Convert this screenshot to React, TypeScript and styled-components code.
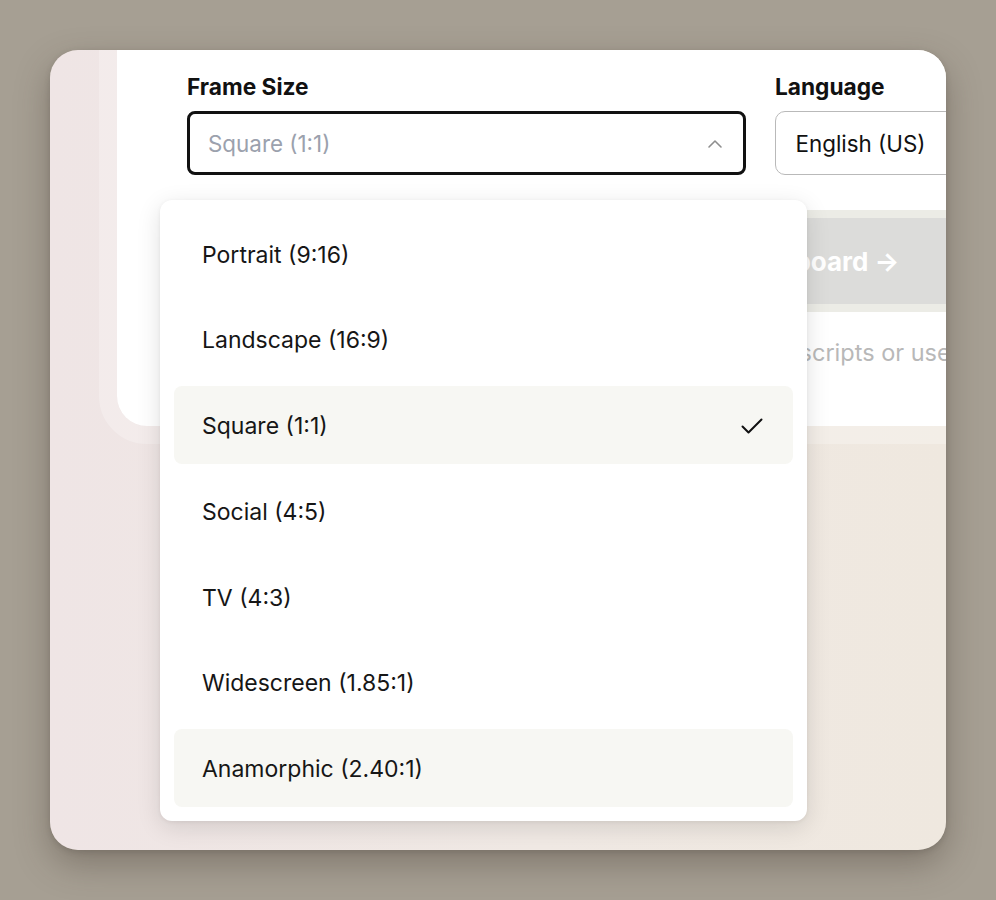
import React from 'react';
import styled, { createGlobalStyle } from 'styled-components';

const GlobalStyle = createGlobalStyle`
  html, body {
    margin: 0;
    padding: 0;
    background: #a69f93;
    font-family: Inter, 'Noto Sans', sans-serif;
    -webkit-font-smoothing: antialiased;
  }
  * { box-sizing: border-box; }
`;

const Stage = styled.div`
  width: 996px;
  height: 900px;
  padding: 50px;
`;

const Window = styled.div`
  position: relative;
  width: 896px;
  height: 800px;
  border-radius: 28px;
  overflow: hidden;
  background: linear-gradient(90deg, #efe5e5 0%, #f0e9e4 55%, #efe8df 100%);
  box-shadow: 0 14px 34px rgba(60, 50, 40, 0.35), 0 2px 6px rgba(0, 0, 0, 0.12);
  padding-left: 49px;
`;

const Halo = styled.div`
  width: 1400px;
  margin-top: -78px;
  border: 18px solid rgba(255, 255, 255, 0.25);
  border-radius: 48px;
`;

const Card = styled.div`
  background: #ffffff;
  border-radius: 30px;
  padding: 83px 0 59px 70px;
`;

const FormRow = styled.div`
  display: flex;
  gap: 29px;
`;

const Field = styled.div<{ $width: number }>`
  display: flex;
  flex-direction: column;
  gap: 10px;
  width: ${p => p.$width}px;
`;

const Label = styled.div`
  font-size: 22.7px;
  line-height: 28px;
  font-weight: 700;
  color: #111111;
`;

const SelectBox = styled.div<{ $focused?: boolean }>`
  display: flex;
  align-items: center;
  justify-content: space-between;
  height: 64px;
  padding: 1px 18px 0 ${p => (p.$focused ? 18 : 19.5)}px;
  border: ${p => (p.$focused ? '3px solid #111111' : '1.5px solid #b9b9b9')};
  border-radius: ${p => (p.$focused ? 8 : 10)}px;
  background: #ffffff;
  font-size: 22.4px;
  color: ${p => (p.$focused ? '#9ba1ad' : '#111111')};
`;

const ButtonFrame = styled.div`
  margin-top: 35px;
  width: 1128px;
  border-top: 8px solid #ecece6;
  border-bottom: 8px solid #ecece6;
  background: #dcdcda;
  height: 102px;
  display: flex;
  align-items: center;
  justify-content: center;
  font-size: 26px;
  font-weight: 700;
  color: #ffffff;
`;

const Helper = styled.div`
  margin-top: 27px;
  padding-left: 488px;
  font-size: 23.5px;
  line-height: 28px;
  color: #b8b8b8;
  white-space: nowrap;
`;

const Menu = styled.div`
  position: absolute;
  left: 110px;
  top: 150px;
  width: 647px;
  padding: 14px;
  background: #ffffff;
  border-radius: 12px;
  box-shadow: 0 6px 24px rgba(0, 0, 0, 0.12), 0 1px 4px rgba(0, 0, 0, 0.06);
  display: flex;
  flex-direction: column;
  gap: 7.8px;
`;

const Option = styled.div<{ $highlighted?: boolean }>`
  height: 78px;
  display: flex;
  align-items: center;
  justify-content: space-between;
  padding: 3px 28px 0 28px;
  border-radius: 8px;
  background: ${p => (p.$highlighted ? '#f7f7f3' : 'transparent')};
  font-size: 23px;
  color: #161616;
`;

const ChevronUp = () => (
  <svg width="20" height="20" viewBox="0 0 20 20" fill="none">
    <path d="M4 13l6-6 6 6" stroke="#8e8e8e" strokeWidth="1.6" strokeLinecap="round" strokeLinejoin="round" />
  </svg>
);

const Check = () => (
  <svg width="26" height="26" viewBox="0 0 26 26" fill="none">
    <path d="M3.5 13.5l6 6 13-13" stroke="#111111" strokeWidth="2" strokeLinecap="round" strokeLinejoin="round" />
  </svg>
);

const options = [
  'Portrait (9:16)',
  'Landscape (16:9)',
  'Square (1:1)',
  'Social (4:5)',
  'TV (4:3)',
  'Widescreen (1.85:1)',
  'Anamorphic (2.40:1)',
];

export default function App() {
  const selected = 'Square (1:1)';
  const hovered = 'Anamorphic (2.40:1)';
  return (
    <>
      <GlobalStyle />
      <Stage>
        <Window>
          <Halo>
            <Card>
              <FormRow>
                <Field $width={559}>
                  <Label>Frame Size</Label>
                  <SelectBox $focused>
                    <span>Square (1:1)</span>
                    <ChevronUp />
                  </SelectBox>
                </Field>
                <Field $width={559}>
                  <Label>Language</Label>
                  <SelectBox>
                    <span>English (US)</span>
                  </SelectBox>
                </Field>
              </FormRow>
              <ButtonFrame>Generate Storyboard →</ButtonFrame>
              <Helper>Paste your scripts or use a template</Helper>
            </Card>
          </Halo>
          <Menu>
            {options.map(o => (
              <Option key={o} $highlighted={o === selected || o === hovered}>
                <span>{o}</span>
                {o === selected && <Check />}
              </Option>
            ))}
          </Menu>
        </Window>
      </Stage>
    </>
  );
}
